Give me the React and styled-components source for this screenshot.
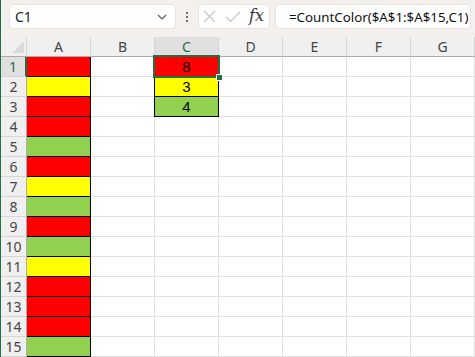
import React from "react";
import styled, { createGlobalStyle, css } from "styled-components";

const GlobalStyle = createGlobalStyle`
  body {
    margin: 0;
    background: #ffffff;
    font-family: "Segoe UI", "Noto Sans", "Open Sans", sans-serif;
  }
`;

const RED = "#ff0000";
const YELLOW = "#ffff00";
const GREEN = "#92d050";

const columnA = [RED, YELLOW, RED, RED, GREEN, RED, YELLOW, GREEN, RED, GREEN, YELLOW, RED, RED, RED, GREEN];
const columnC = [
  { fill: RED, value: 8 },
  { fill: YELLOW, value: 3 },
  { fill: GREEN, value: 4 },
];
const columns = ["A", "B", "C", "D", "E", "F", "G"];

const App = () => {
  return (
    <>
      <GlobalStyle />
      <Window>
        <FormulaBar>
          <NameBox>
            <span>C1</span>
            <svg width="10" height="6" viewBox="0 0 10 6">
              <path d="M1 1 L5 5 L9 1" fill="none" stroke="#555" strokeWidth="1.1" />
            </svg>
          </NameBox>
          <Dots>
            <i />
            <i />
            <i />
          </Dots>
          <ButtonGroup>
            <svg width="13" height="13" viewBox="0 0 13 13">
              <path d="M1 1 L12 12 M12 1 L1 12" stroke="#c4c4c4" strokeWidth="1.1" />
            </svg>
            <svg width="16" height="12" viewBox="0 0 16 12">
              <path d="M1 6 L5.5 10.5 L15 1" fill="none" stroke="#c4c4c4" strokeWidth="1.1" />
            </svg>
            <Fx>fx</Fx>
          </ButtonGroup>
          <FormulaInput>=CountColor($A$1:$A$15,C1)</FormulaInput>
        </FormulaBar>

        <Sheet>
          <Corner>
            <svg width="12" height="12" viewBox="0 0 12 12">
              <polygon points="12,0 12,12 0,12" fill="#dadada" />
            </svg>
          </Corner>
          {columns.map((c) => (
            <ColHeader key={c} $selected={c === "C"}>
              {c}
            </ColHeader>
          ))}
          {columnA.map((fill, i) => (
            <React.Fragment key={i}>
              <RowHeader $selected={i === 0}>{i + 1}</RowHeader>
              <Cell $fill={fill} $bordered />
              <Cell />
              {columnC[i] ? (
                <Cell $fill={columnC[i].fill} $bordered $leftEdge $selected={i === 0}>
                  {columnC[i].value}
                </Cell>
              ) : (
                <Cell />
              )}
              <Cell />
              <Cell />
              <Cell />
              <Cell />
            </React.Fragment>
          ))}
        </Sheet>
      </Window>
    </>
  );
};

const Window = styled.div`
  width: 475px;
  height: 357px;
  overflow: hidden;
  box-sizing: border-box;
  border-left: 1px solid #1f7145;
  display: flex;
  flex-direction: column;
`;

const FormulaBar = styled.div`
  height: 37px;
  flex: none;
  background: #f3f0ed;
  display: flex;
  align-items: flex-start;
  padding: 4px 4px 0 8px;
  box-sizing: border-box;
`;

const boxBase = css`
  height: 25px;
  box-sizing: border-box;
  background: #ffffff;
  border: 1px solid #e6e3e0;
  border-radius: 4px;
  display: flex;
  align-items: center;
`;

const NameBox = styled.div`
  ${boxBase};
  width: 167px;
  padding: 0 8px 0 5px;
  justify-content: space-between;
  font-size: 14px;
  color: #222;
`;

const Dots = styled.div`
  width: 22px;
  height: 25px;
  display: flex;
  flex-direction: column;
  align-items: center;
  justify-content: center;
  gap: 2px;

  i {
    width: 2px;
    height: 2px;
    background: #444;
    border-radius: 1px;
  }
`;

const ButtonGroup = styled.div`
  ${boxBase};
  width: 72px;
  padding: 0 5px 0 4px;
  justify-content: space-between;
`;

const Fx = styled.span`
  font-family: "DejaVu Serif", "Liberation Serif", serif;
  font-style: italic;
  font-size: 16px;
  color: #333;
  line-height: 1;
  margin-top: -2px;
`;

const FormulaInput = styled.div`
  ${boxBase};
  flex: 1;
  margin-left: 5px;
  padding-left: 13px;
  font-size: 13.3px;
  color: #111;
  white-space: nowrap;
`;

const Sheet = styled.div`
  display: grid;
  grid-template-columns: 26px repeat(7, 64px);
  grid-auto-rows: 20px;
  font-family: "Segoe UI", "Noto Sans", "Open Sans", sans-serif;
`;

const headerBase = css`
  box-sizing: border-box;
  background: #f0f0f0;
  color: #454545;
  font-size: 14px;
  display: flex;
  align-items: center;
  justify-content: center;
`;

const Corner = styled.div`
  ${headerBase};
  border-right: 1px solid #d6d6d6;
  border-bottom: 1px solid #ababab;
  align-items: flex-end;
  justify-content: flex-end;
  padding: 0 2px 3px 0;
`;

const ColHeader = styled.div`
  ${headerBase};
  border-right: 1px solid #d6d6d6;
  border-bottom: 1px solid #ababab;
  ${({ $selected }) =>
    $selected &&
    css`
      background: #e0e0e0;
      color: #1f6e45;
    `}
`;

const RowHeader = styled.div`
  ${headerBase};
  border-right: 1px solid #ababab;
  border-bottom: 1px solid #d6d6d6;
  ${({ $selected }) =>
    $selected &&
    css`
      background: #e0e0e0;
      color: #1f6e45;
      border-right: 2px solid #1f7145;
    `}
`;

const Cell = styled.div`
  box-sizing: border-box;
  background: ${({ $fill }) => $fill || "#ffffff"};
  border-right: 1px solid ${({ $bordered }) => ($bordered ? "#000" : "#e1e1e1")};
  border-bottom: 1px solid ${({ $bordered }) => ($bordered ? "#000" : "#e1e1e1")};
  font-family: "Liberation Sans", Arial, sans-serif;
  font-size: 15px;
  color: #000;
  display: flex;
  align-items: center;
  justify-content: center;
  ${({ $leftEdge }) => $leftEdge && "box-shadow: -1px 0 0 #000;"}
  ${({ $selected }) =>
    $selected &&
    css`
      position: relative;
      z-index: 1;
      &::after {
        content: "";
        position: absolute;
        left: -2px;
        top: -2px;
        right: -2px;
        bottom: -2px;
        border: 2px solid #1f7145;
      }
      &::before {
        content: "";
        position: absolute;
        right: -5px;
        bottom: -5px;
        width: 7px;
        height: 7px;
        box-sizing: border-box;
        background: #1f7145;
        border: 1px solid #ffffff;
        z-index: 2;
      }
    `}
`;

export default App;
